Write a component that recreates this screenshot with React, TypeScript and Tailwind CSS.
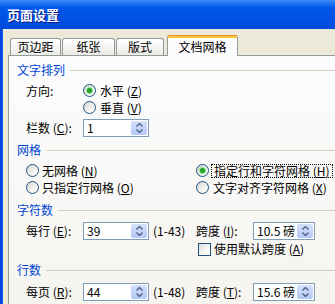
import type { ReactNode } from 'react'

function Radio({ checked }: { checked?: boolean }) {
  return (
    <span className="flex h-[13px] w-[13px] shrink-0 items-center justify-center rounded-full border border-[#1C5180] bg-linear-to-br from-[#D6D6D0] via-[#EFEFEA] to-white">
      {checked && (
        <span className="h-[5px] w-[5px] rounded-full bg-[#21A121] shadow-[0_0_1px_1px_#8EDB8E]" />
      )}
    </span>
  )
}

function Checkbox() {
  return (
    <span className="block h-[13px] w-[13px] shrink-0 border border-[#1C5180] bg-linear-to-br from-[#DCDCD7] via-[#F3F3EF] to-white" />
  )
}

function Key({ k }: { k: string }) {
  return (
    <>
      {' ('}
      <u className="underline-offset-[1px]">{k}</u>
      {')'}
    </>
  )
}

function Group({ title, className = '' }: { title: string; className?: string }) {
  return (
    <div className={`flex h-[14px] items-center pl-2 ${className}`}>
      <span className="text-[#0046D5]">{title}</span>
      <span className="ml-[5px] h-px flex-1 bg-[#D0D0BF]" />
    </div>
  )
}

function Chevron({ up }: { up?: boolean }) {
  return (
    <svg width="7" height="4" viewBox="0 0 7 4">
      <polyline
        points={up ? '0.5,3.5 3.5,0.5 6.5,3.5' : '0.5,0.5 3.5,3.5 6.5,0.5'}
        fill="none"
        stroke="#4D6185"
        strokeWidth="1.4"
      />
    </svg>
  )
}

function Spin({ value, width }: { value: string; width: string }) {
  return (
    <div className={`flex h-[18px] ${width} shrink-0 items-center border border-[#7F9DB9] bg-white pr-px`}>
      <span className="flex-1 pl-[3px] leading-none">{value}</span>
      <div className="flex h-[14px] w-[16px] flex-col overflow-hidden rounded-[2px] bg-linear-to-b from-[#D4E0FC] to-[#B4C8F6]">
        <div className="flex flex-1 items-end justify-center pb-px">
          <Chevron up />
        </div>
        <div className="flex flex-1 items-start justify-center pt-px">
          <Chevron />
        </div>
      </div>
    </div>
  )
}

function Tab({ children, width, active }: { children: ReactNode; width: string; active?: boolean }) {
  if (active) {
    return (
      <div
        className={`relative z-10 -mb-px flex h-[21px] ${width} flex-col rounded-t-[3px] border-x border-[#919B9C] bg-[#FCFCFE]`}
      >
        <div className="h-px rounded-t-[3px] bg-[#E68B2C]" />
        <div className="h-[2px] bg-[#FFC73C]" />
        <div className="flex flex-1 items-center justify-center">{children}</div>
      </div>
    )
  }
  return (
    <div
      className={`flex h-[17px] ${width} items-center justify-center rounded-t-[3px] border-x border-t border-[#919B9C] bg-linear-to-b from-white to-[#ECEBE6]`}
    >
      {children}
    </div>
  )
}

export default function App() {
  return (
    <div className="flex h-[304px] w-[335px] flex-col overflow-hidden bg-[#ECE9D8] font-['Noto_Sans_CJK_SC',sans-serif] text-[12px] leading-[14px] text-black">
      {/* title bar */}
      <div className="flex h-[29px] shrink-0 items-center bg-linear-to-b from-[#3D8DF7] via-[#0058EA] via-25% to-[#004BDD] pl-[7px]">
        <span className="text-[13px] font-bold text-white [text-shadow:1px_1px_#0A1883]">页面设置</span>
      </div>

      <div className="flex min-h-0 flex-1">
        <div className="w-[3px] shrink-0 bg-linear-to-r from-[#0831D9] to-[#1662EC]" />

        <div className="flex min-w-0 flex-1 flex-col pl-[5px]">
          {/* tabs */}
          <div className="flex h-[26px] shrink-0 items-end">
            <div className="ml-[2px]">
              <Tab width="w-[51px]">页边距</Tab>
            </div>
            <div className="ml-px">
              <Tab width="w-[53px]">纸张</Tab>
            </div>
            <div className="ml-px">
              <Tab width="w-[48px]">版式</Tab>
            </div>
            <div className="ml-[3px]">
              <Tab width="w-[71px]" active>
                文档网格
              </Tab>
            </div>
          </div>

          {/* panel */}
          <div className="flex flex-1 flex-col border-l border-t border-[#919B9C] bg-linear-to-b from-[#FCFCFE] to-[#F5F4EF]">
            <Group title="文字排列" className="mt-[7px]" />

            <div className="mt-[5px] flex h-[17px] items-center pl-[17px]">
              <span className="w-[57px] shrink-0">方向:</span>
              <Radio checked />
              <span className="ml-[4px]">
                水平<Key k="Z" />
              </span>
            </div>
            <div className="flex h-[17px] items-center pl-[74px]">
              <Radio />
              <span className="ml-[4px]">
                垂直<Key k="V" />
              </span>
            </div>
            <div className="mt-[3px] flex h-[18px] items-center pl-[17px]">
              <span className="w-[57px] shrink-0">
                栏数<Key k="C" />:
              </span>
              <Spin value="1" width="w-[66px]" />
            </div>

            <Group title="网格" className="mt-[6px]" />

            <div className="mt-[5px] flex h-[17px] items-center pl-[17px]">
              <div className="flex w-[170px] shrink-0 items-center">
                <Radio />
                <span className="ml-[3px]">
                  无网格<Key k="N" />
                </span>
              </div>
              <Radio checked />
              <span className="ml-[2px] border border-dotted border-black px-[2px] leading-[12px]">
                指定行和字符网格<Key k="H" />
              </span>
            </div>
            <div className="flex h-[17px] items-center pl-[17px]">
              <div className="flex w-[170px] shrink-0 items-center">
                <Radio />
                <span className="ml-[3px]">
                  只指定行网格<Key k="O" />
                </span>
              </div>
              <Radio />
              <span className="ml-[4px]">
                文字对齐字符网格<Key k="X" />
              </span>
            </div>

            <Group title="字符数" className="mt-[7px]" />

            <div className="mt-[5px] flex h-[18px] items-center pl-[17px]">
              <span className="w-[57px] shrink-0">
                每行<Key k="E" />:
              </span>
              <Spin value="39" width="w-[66px]" />
              <span className="ml-[4px] w-[43px] shrink-0">(1-43)</span>
              <span className="w-[57px] shrink-0">
                跨度<Key k="I" />:
              </span>
              <Spin value="10.5 磅" width="w-[62px]" />
            </div>
            <div className="mt-[2px] flex h-[14px] items-center pl-[189px]">
              <Checkbox />
              <span className="ml-[3px]">
                使用默认跨度<Key k="A" />
              </span>
            </div>

            <Group title="行数" className="mt-[7px]" />

            <div className="mt-[6px] flex h-[18px] items-center pl-[17px]">
              <span className="w-[57px] shrink-0">
                每页<Key k="R" />:
              </span>
              <Spin value="44" width="w-[66px]" />
              <span className="ml-[4px] w-[43px] shrink-0">(1-48)</span>
              <span className="w-[57px] shrink-0">
                跨度<Key k="T" />:
              </span>
              <Spin value="15.6 磅" width="w-[62px]" />
            </div>
          </div>
        </div>
      </div>
    </div>
  )
}
